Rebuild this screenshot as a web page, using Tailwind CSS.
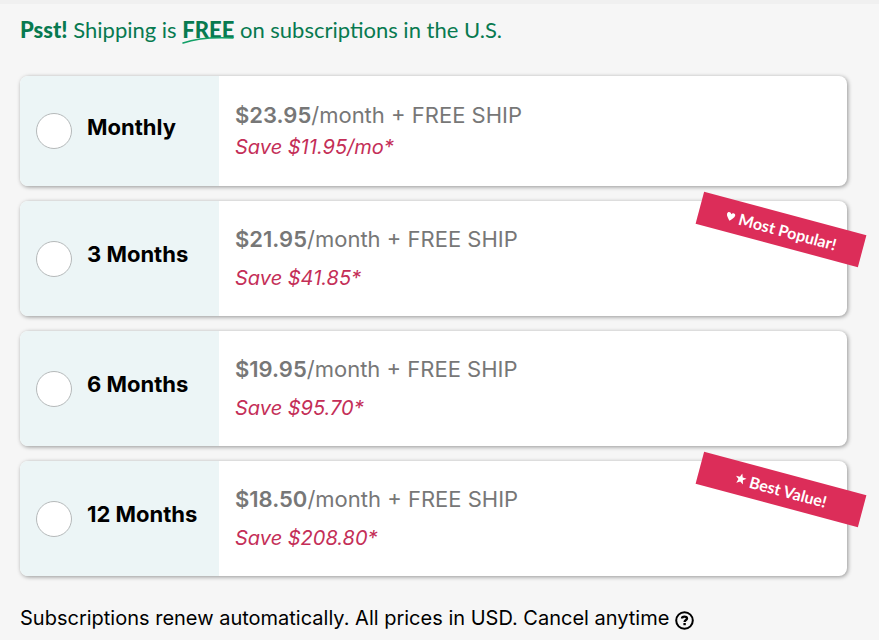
<!DOCTYPE html>
<html lang="en">
<head>
    <meta charset="UTF-8">
    <meta name="viewport" content="width=device-width, initial-scale=1.0">
    <title>Choose Your Subscription</title>
    <script src="https://cdn.jsdelivr.net/npm/@tailwindcss/browser@4"></script>
</head>
<body class="bg-[#f6f6f6] font-[Lato,sans-serif] text-black border-t-4 border-[#f0f0f0]">
    <form class="pl-5 pr-8">
        <h1 class="pt-2.5 text-[22px] leading-8 text-[#087a50] whitespace-nowrap">
            <strong class="font-black">Psst!</strong> Shipping is
            <strong class="relative font-black">FREE<svg class="absolute left-0 top-5 w-full h-2" viewBox="0 0 48 8" preserveAspectRatio="none" fill="none" stroke="#12a067" stroke-width="1.5" stroke-linecap="round" aria-hidden="true"><path d="M1 7C14 2 29 1 47 2"/></svg></strong>
            on subscriptions in the U.S.
        </h1>

        <!-- Subscription plans -->
        <div class="mt-[30px] flex flex-col gap-[15px] font-[Inter,sans-serif]">
            <div class="relative flex rounded-lg bg-white shadow-[1px_1px_4px_rgba(0,0,0,0.4)]">
                <label for="monthly" class="flex w-[199px] shrink-0 items-center gap-[15px] rounded-l-lg bg-[#ecf5f6] pl-4 text-[22px] font-bold">
                    <input type="radio" id="monthly" name="plan" class="size-9 shrink-0 appearance-none rounded-full border border-[#b5b9ba] bg-white checked:border-[10px] checked:border-[#087a50]">
                    <span class="pb-2">Monthly</span>
                </label>
                <div class="flex flex-col gap-1 pt-[25px] pb-[25px] pl-4 leading-7">
                    <p class="text-[22px] text-[#777]"><strong class="font-semibold">$23.95</strong>/month + FREE SHIP</p>
                    <p class="text-xl italic text-[#c42e57]">Save $11.95/mo*</p>
                </div>
            </div>

            <div class="relative flex rounded-lg bg-white shadow-[1px_1px_4px_rgba(0,0,0,0.4)]">
                <label for="months3" class="flex w-[199px] shrink-0 items-center gap-[15px] rounded-l-lg bg-[#ecf5f6] pl-4 text-[22px] font-bold">
                    <input type="radio" id="months3" name="plan" class="size-9 shrink-0 appearance-none rounded-full border border-[#b5b9ba] bg-white checked:border-[10px] checked:border-[#087a50]">
                    <span class="pb-2">3 Months</span>
                </label>
                <div class="flex flex-col gap-[11px] py-6 pl-4 leading-7">
                    <p class="text-[22px] text-[#777]"><strong class="font-semibold">$21.95</strong>/month + FREE SHIP</p>
                    <p class="text-xl italic text-[#c42e57]">Save $41.85*</p>
                </div>
                <div class="absolute top-3 -right-[18px] flex h-[33px] w-[168px] rotate-15 items-center justify-center gap-1 bg-[#dc2d59] font-[Lato,sans-serif] text-base font-bold text-white">
                    <svg class="size-2.5" viewBox="0 0 10 10" fill="currentColor" aria-hidden="true"><path d="M5 9.5C3.5 7.5.8 5.5.8 3.2.8.8 4 .2 5 2.6 6 .2 9.2.8 9.2 3.2 9.2 5.5 6.500 7.500 5 9.500Z"/></svg>
                    Most Popular!
                </div>
            </div>

            <div class="relative flex rounded-lg bg-white shadow-[1px_1px_4px_rgba(0,0,0,0.4)]">
                <label for="months6" class="flex w-[199px] shrink-0 items-center gap-[15px] rounded-l-lg bg-[#ecf5f6] pl-4 text-[22px] font-bold">
                    <input type="radio" id="months6" name="plan" class="size-9 shrink-0 appearance-none rounded-full border border-[#b5b9ba] bg-white checked:border-[10px] checked:border-[#087a50]">
                    <span class="pb-2">6 Months</span>
                </label>
                <div class="flex flex-col gap-[11px] py-6 pl-4 leading-7">
                    <p class="text-[22px] text-[#777]"><strong class="font-semibold">$19.95</strong>/month + FREE SHIP</p>
                    <p class="text-xl italic text-[#c42e57]">Save $95.70*</p>
                </div>
            </div>

            <div class="relative flex rounded-lg bg-white shadow-[1px_1px_4px_rgba(0,0,0,0.4)]">
                <label for="months12" class="flex w-[199px] shrink-0 items-center gap-[15px] rounded-l-lg bg-[#ecf5f6] pl-4 text-[22px] font-bold">
                    <input type="radio" id="months12" name="plan" class="size-9 shrink-0 appearance-none rounded-full border border-[#b5b9ba] bg-white checked:border-[10px] checked:border-[#087a50]">
                    <span class="pb-2">12 Months</span>
                </label>
                <div class="flex flex-col gap-[11px] py-6 pl-4 leading-7">
                    <p class="text-[22px] text-[#777]"><strong class="font-semibold">$18.50</strong>/month + FREE SHIP</p>
                    <p class="text-xl italic text-[#c42e57]">Save $208.80*</p>
                </div>
                <div class="absolute top-3 -right-[18px] flex h-[33px] w-[168px] rotate-15 items-center justify-center gap-1 bg-[#dc2d59] font-[Lato,sans-serif] text-base font-bold text-white">
                    <svg class="size-[11px]" viewBox="0 0 10 10" fill="currentColor" aria-hidden="true"><path d="M5 0l1.300 3.500 3.700.1-2.900 2.300L8.100 9.600 5 7.500 1.900 9.600l1-3.700L0 3.600l3.700-.1Z"/></svg>
                    Best Value!
                </div>
            </div>
        </div>

        <div class="mt-7 flex items-center gap-1.5 font-[Inter,sans-serif] text-xl leading-7">
            <p>Subscriptions renew automatically. All prices in USD. Cancel anytime</p>
            <button type="button" aria-label="More information" class="mt-1">
                <svg class="size-[19px]" viewBox="0 0 19 19" fill="none" stroke="currentColor" stroke-width="2" aria-hidden="true"><circle cx="9.500" cy="9.500" r="8.300"/><path stroke-width="2.400" d="M7 7.600C7 5 12 5 12 7.500 12 9 9.600 8.900 9.600 11"/><path stroke-width="2.400" d="M9.600 12v2.200"/></svg>
            </button>
        </div>
    </form>
</body>
</html>
